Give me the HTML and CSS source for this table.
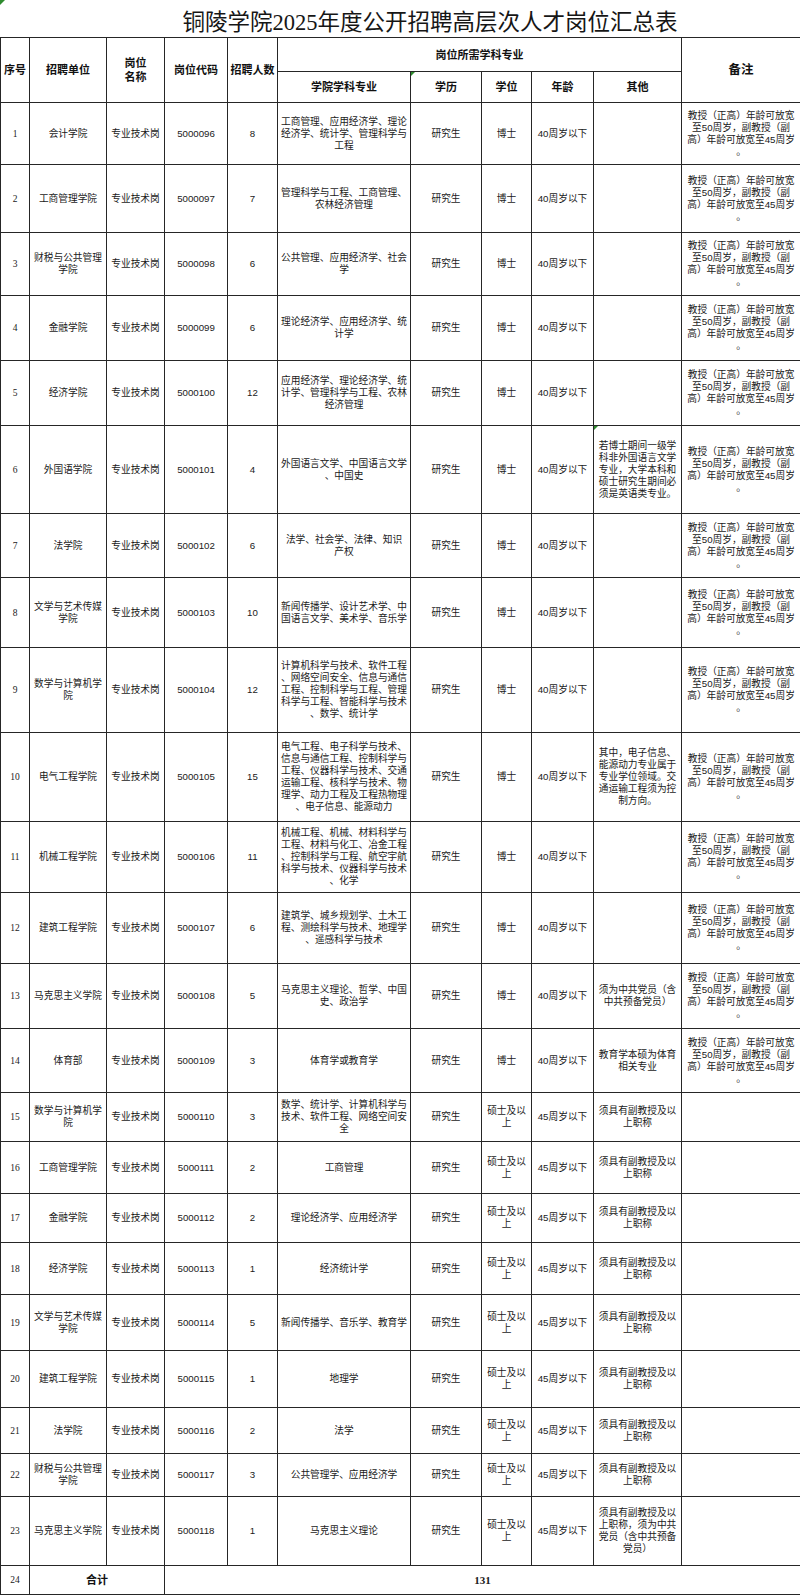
FILE: index.html
```html
<!DOCTYPE html>
<html lang="zh-CN">
<head>
<meta charset="utf-8">
<title>铜陵学院2025年度公开招聘高层次人才岗位汇总表</title>
<link rel="stylesheet" href="styles.css">
</head>
<body>
<div class="title">铜陵学院2025年度公开招聘高层次人才岗位汇总表</div>
<table class="sheet">
<colgroup>
<col class="c-no"><col class="c-unit"><col class="c-post"><col class="c-code"><col class="c-num"><col class="c-major"><col class="c-edu"><col class="c-deg"><col class="c-age"><col class="c-other"><col class="c-note">
</colgroup>
<tbody>
<tr class="h34">
<td class="hd" rowspan="2">序号</td>
<td class="hd" rowspan="2">招聘单位</td>
<td class="hd" rowspan="2">岗位<br>名称</td>
<td class="hd" rowspan="2">岗位代码</td>
<td class="hd" rowspan="2">招聘人数</td>
<td class="hd" colspan="5">岗位所需学科专业</td>
<td class="hd big" rowspan="2">备注</td>
</tr>
<tr class="h31">
<td class="hd">学院学科专业</td>
<td class="hd mark">学历</td>
<td class="hd">学位</td>
<td class="hd">年龄</td>
<td class="hd">其他</td>
</tr>

<tr class="h62"><td class="no">1</td><td>会计学院</td><td>专业技术岗</td><td>5000096</td><td>8</td><td>工商管理、应用经济学、理论<br>经济学、统计学、管理科学与<br>工程</td><td>研究生</td><td>博士</td><td>40周岁以下</td><td></td><td>教授（正高）年龄可放宽<br>至50周岁，副教授（副<br>高）年龄可放宽至45周岁<br>。</td></tr>

<tr class="h68"><td class="no">2</td><td>工商管理学院</td><td>专业技术岗</td><td>5000097</td><td>7</td><td>管理科学与工程、工商管理、<br>农林经济管理</td><td>研究生</td><td>博士</td><td>40周岁以下</td><td></td><td>教授（正高）年龄可放宽<br>至50周岁，副教授（副<br>高）年龄可放宽至45周岁<br>。</td></tr>

<tr class="h63"><td class="no">3</td><td>财税与公共管理<br>学院</td><td>专业技术岗</td><td>5000098</td><td>6</td><td>公共管理、应用经济学、社会<br>学</td><td>研究生</td><td>博士</td><td>40周岁以下</td><td></td><td>教授（正高）年龄可放宽<br>至50周岁，副教授（副<br>高）年龄可放宽至45周岁<br>。</td></tr>

<tr class="h65"><td class="no">4</td><td>金融学院</td><td>专业技术岗</td><td>5000099</td><td>6</td><td>理论经济学、应用经济学、统<br>计学</td><td>研究生</td><td>博士</td><td>40周岁以下</td><td></td><td>教授（正高）年龄可放宽<br>至50周岁，副教授（副<br>高）年龄可放宽至45周岁<br>。</td></tr>

<tr class="h65"><td class="no">5</td><td>经济学院</td><td>专业技术岗</td><td>5000100</td><td>12</td><td>应用经济学、理论经济学、统<br>计学、管理科学与工程、农林<br>经济管理</td><td>研究生</td><td>博士</td><td>40周岁以下</td><td></td><td>教授（正高）年龄可放宽<br>至50周岁，副教授（副<br>高）年龄可放宽至45周岁<br>。</td></tr>

<tr class="h88"><td class="no">6</td><td>外国语学院</td><td>专业技术岗</td><td>5000101</td><td>4</td><td>外国语言文学、中国语言文学<br>、中国史</td><td>研究生</td><td>博士</td><td>40周岁以下</td><td class="mark">若博士期间一级学<br>科非外国语言文学<br>专业，大学本科和<br>硕士研究生期间必<br>须是英语类专业。</td><td>教授（正高）年龄可放宽<br>至50周岁，副教授（副<br>高）年龄可放宽至45周岁<br>。</td></tr>

<tr class="h64"><td class="no">7</td><td>法学院</td><td>专业技术岗</td><td>5000102</td><td>6</td><td>法学、社会学、法律、知识<br>产权</td><td>研究生</td><td>博士</td><td>40周岁以下</td><td></td><td>教授（正高）年龄可放宽<br>至50周岁，副教授（副<br>高）年龄可放宽至45周岁<br>。</td></tr>

<tr class="h70"><td class="no">8</td><td>文学与艺术传媒<br>学院</td><td>专业技术岗</td><td>5000103</td><td>10</td><td>新闻传播学、设计艺术学、中<br>国语言文学、美术学、音乐学</td><td>研究生</td><td>博士</td><td>40周岁以下</td><td></td><td>教授（正高）年龄可放宽<br>至50周岁，副教授（副<br>高）年龄可放宽至45周岁<br>。</td></tr>

<tr class="h85"><td class="no">9</td><td>数学与计算机学<br>院</td><td>专业技术岗</td><td>5000104</td><td>12</td><td>计算机科学与技术、软件工程<br>、网络空间安全、信息与通信<br>工程、控制科学与工程、管理<br>科学与工程、智能科学与技术<br>、数学、统计学</td><td>研究生</td><td>博士</td><td>40周岁以下</td><td></td><td>教授（正高）年龄可放宽<br>至50周岁，副教授（副<br>高）年龄可放宽至45周岁<br>。</td></tr>

<tr class="h89"><td class="no">10</td><td>电气工程学院</td><td>专业技术岗</td><td>5000105</td><td>15</td><td>电气工程、电子科学与技术、<br>信息与通信工程、控制科学与<br>工程、仪器科学与技术、交通<br>运输工程、核科学与技术、物<br>理学、动力工程及工程热物理<br>、电子信息、能源动力</td><td>研究生</td><td>博士</td><td>40周岁以下</td><td>其中，电子信息、<br>能源动力专业属于<br>专业学位领域。交<br>通运输工程须为控<br>制方向。</td><td>教授（正高）年龄可放宽<br>至50周岁，副教授（副<br>高）年龄可放宽至45周岁<br>。</td></tr>

<tr class="h71"><td class="no">11</td><td>机械工程学院</td><td>专业技术岗</td><td>5000106</td><td>11</td><td>机械工程、机械、材料科学与<br>工程、材料与化工、冶金工程<br>、控制科学与工程、航空宇航<br>科学与技术、仪器科学与技术<br>、化学</td><td>研究生</td><td>博士</td><td>40周岁以下</td><td></td><td>教授（正高）年龄可放宽<br>至50周岁，副教授（副<br>高）年龄可放宽至45周岁<br>。</td></tr>

<tr class="h71"><td class="no">12</td><td>建筑工程学院</td><td>专业技术岗</td><td>5000107</td><td>6</td><td>建筑学、城乡规划学、土木工<br>程、测绘科学与技术、地理学<br>、遥感科学与技术</td><td>研究生</td><td>博士</td><td>40周岁以下</td><td></td><td>教授（正高）年龄可放宽<br>至50周岁，副教授（副<br>高）年龄可放宽至45周岁<br>。</td></tr>

<tr class="h65"><td class="no">13</td><td>马克思主义学院</td><td>专业技术岗</td><td>5000108</td><td>5</td><td>马克思主义理论、哲学、中国<br>史、政治学</td><td>研究生</td><td>博士</td><td>40周岁以下</td><td>须为中共党员（含<br>中共预备党员）</td><td>教授（正高）年龄可放宽<br>至50周岁，副教授（副<br>高）年龄可放宽至45周岁<br>。</td></tr>

<tr class="h64"><td class="no">14</td><td>体育部</td><td>专业技术岗</td><td>5000109</td><td>3</td><td>体育学或教育学</td><td>研究生</td><td>博士</td><td>40周岁以下</td><td>教育学本硕为体育<br>相关专业</td><td>教授（正高）年龄可放宽<br>至50周岁，副教授（副<br>高）年龄可放宽至45周岁<br>。</td></tr>

<tr class="h49"><td class="no">15</td><td>数学与计算机学<br>院</td><td>专业技术岗</td><td>5000110</td><td>3</td><td>数学、统计学、计算机科学与<br>技术、软件工程、网络空间安<br>全</td><td>研究生</td><td>硕士及以<br>上</td><td>45周岁以下</td><td>须具有副教授及以<br>上职称</td><td></td></tr>

<tr class="h52"><td class="no">16</td><td>工商管理学院</td><td>专业技术岗</td><td>5000111</td><td>2</td><td>工商管理</td><td>研究生</td><td>硕士及以<br>上</td><td>45周岁以下</td><td>须具有副教授及以<br>上职称</td><td></td></tr>

<tr class="h49"><td class="no">17</td><td>金融学院</td><td>专业技术岗</td><td>5000112</td><td>2</td><td>理论经济学、应用经济学</td><td>研究生</td><td>硕士及以<br>上</td><td>45周岁以下</td><td>须具有副教授及以<br>上职称</td><td></td></tr>

<tr class="h52"><td class="no">18</td><td>经济学院</td><td>专业技术岗</td><td>5000113</td><td>1</td><td>经济统计学</td><td>研究生</td><td>硕士及以<br>上</td><td>45周岁以下</td><td>须具有副教授及以<br>上职称</td><td></td></tr>

<tr class="h56"><td class="no">19</td><td>文学与艺术传媒<br>学院</td><td>专业技术岗</td><td>5000114</td><td>5</td><td>新闻传播学、音乐学、教育学</td><td>研究生</td><td>硕士及以<br>上</td><td>45周岁以下</td><td>须具有副教授及以<br>上职称</td><td></td></tr>

<tr class="h57"><td class="no">20</td><td>建筑工程学院</td><td>专业技术岗</td><td>5000115</td><td>1</td><td>地理学</td><td>研究生</td><td>硕士及以<br>上</td><td>45周岁以下</td><td>须具有副教授及以<br>上职称</td><td></td></tr>

<tr class="h46"><td class="no">21</td><td>法学院</td><td>专业技术岗</td><td>5000116</td><td>2</td><td>法学</td><td>研究生</td><td>硕士及以<br>上</td><td>45周岁以下</td><td>须具有副教授及以<br>上职称</td><td></td></tr>

<tr class="h43"><td class="no">22</td><td>财税与公共管理<br>学院</td><td>专业技术岗</td><td>5000117</td><td>3</td><td>公共管理学、应用经济学</td><td>研究生</td><td>硕士及以<br>上</td><td>45周岁以下</td><td>须具有副教授及以<br>上职称</td><td></td></tr>

<tr class="h69"><td class="no">23</td><td>马克思主义学院</td><td>专业技术岗</td><td>5000118</td><td>1</td><td>马克思主义理论</td><td>研究生</td><td>硕士及以<br>上</td><td>45周岁以下</td><td>须具有副教授及以<br>上职称，须为中共<br>党员（含中共预备<br>党员）</td><td></td></tr>

<tr class="h29"><td class="no">24</td><td class="hd" colspan="2">合计</td><td class="total" colspan="8">131</td></tr>
</tbody>
</table>
</body>
</html>
```

FILE: styles.css
```css
* {
  box-sizing: border-box;
}

html,
body {
  margin: 0;
  padding: 0;
  background: #ffffff;
}

body {
  width: 800px;
  color: #151515;
  font-family: "Liberation Sans", "Noto Sans CJK SC", sans-serif;
}

.title {
  position: relative;
  height: 37px;
  display: flex;
  align-items: center;
  justify-content: center;
  padding-left: 60px;
  padding-top: 3px;
  font-family: "Liberation Serif", "Noto Sans CJK SC", serif;
  font-size: 22.5px;
  color: #161616;
}

.title::before {
  content: "";
  position: absolute;
  top: 0;
  left: 0;
  border-top: 5px solid #2e8b2e;
  border-right: 5px solid transparent;
}

.sheet {
  width: 800px;
  border-collapse: collapse;
  table-layout: fixed;
}

.c-no { width: 29px; }
.c-unit { width: 77px; }
.c-post { width: 58px; }
.c-code { width: 63px; }
.c-num { width: 50px; }
.c-major { width: 133px; }
.c-edu { width: 71px; }
.c-deg { width: 50px; }
.c-age { width: 62px; }
.c-other { width: 88px; }
.c-note { width: 119px; }

.sheet td {
  position: relative;
  border: 1px solid #262626;
  padding: 0 1px;
  text-align: center;
  vertical-align: middle;
  white-space: nowrap;
  font-size: 9.7px;
  line-height: 12px;
  color: #1a1a1a;
}

.sheet td.hd {
  font-weight: 700;
  font-size: 11px;
  line-height: 14px;
  color: #111111;
}

.sheet td.big {
  font-size: 12.5px;
}

.sheet td.no {
  font-family: "Liberation Serif", "Noto Sans CJK SC", serif;
  font-size: 9.5px;
}

.sheet td.total {
  font-family: "Liberation Serif", "Noto Sans CJK SC", serif;
  font-weight: 700;
  font-size: 11px;
}

.sheet td.mark::before {
  content: "";
  position: absolute;
  top: 0;
  left: 0;
  border-top: 4px solid #2e8b2e;
  border-right: 4px solid transparent;
}

.h29 { height: 29px; }
.h31 { height: 31px; }
.h34 { height: 34px; }
.h43 { height: 43px; }
.h46 { height: 46px; }
.h49 { height: 49px; }
.h52 { height: 52px; }
.h56 { height: 56px; }
.h57 { height: 57px; }
.h62 { height: 62px; }
.h63 { height: 63px; }
.h64 { height: 64px; }
.h65 { height: 65px; }
.h68 { height: 68px; }
.h69 { height: 69px; }
.h70 { height: 70px; }
.h71 { height: 71px; }
.h85 { height: 85px; }
.h88 { height: 88px; }
.h89 { height: 89px; }
```
